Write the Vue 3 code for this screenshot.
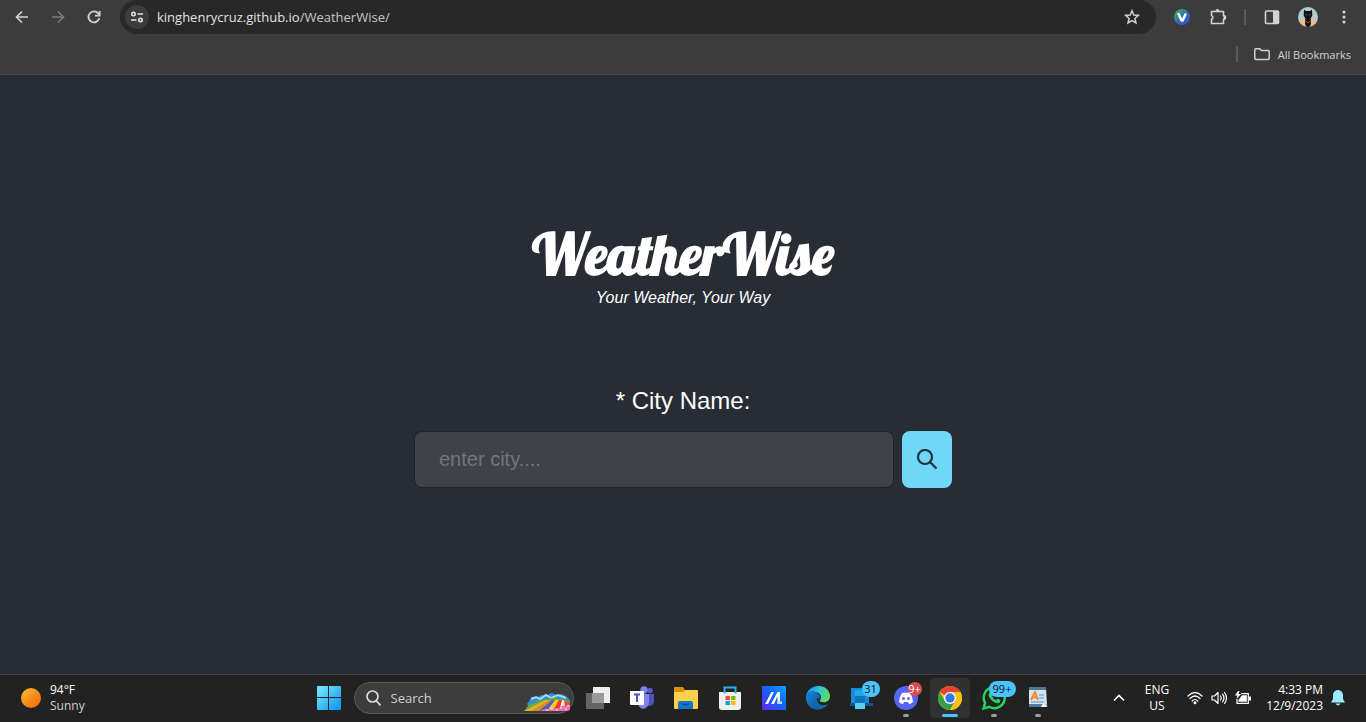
<script setup>
import { ref } from 'vue'

const city = ref('')
const query = ref('')
</script>

<template>
  <div class="screen">
    <header class="browser">
      <div class="toolbar">
        <nav class="nav">
          <button class="tool" type="button" aria-label="Back">
            <svg width="16" height="16" viewBox="0 0 16 16" fill="none" stroke="#d2d2d2" stroke-width="1.7"><path d="M14 8H3M8 2.5 2.5 8 8 13.5" /></svg>
          </button>
          <button class="tool" type="button" aria-label="Forward">
            <svg width="16" height="16" viewBox="0 0 16 16" fill="none" stroke="#7b7b7b" stroke-width="1.7"><path d="M2 8h11M8 2.5 13.5 8 8 13.5" /></svg>
          </button>
          <button class="tool" type="button" aria-label="Reload">
            <svg width="16" height="16" viewBox="0 0 16 16" fill="none" stroke="#d2d2d2" stroke-width="1.8"><path d="M13.3 9.3A5.5 5.5 0 1 1 12.2 4.3L13.5 6" /><path d="M13.6 2v4.6H9" /></svg>
          </button>
        </nav>
        <div class="omnibox">
          <button class="site" type="button" aria-label="Site information">
            <svg width="14" height="14" viewBox="0 0 14 14" fill="none" stroke="#e3e3e3" stroke-width="1.6"><circle cx="3.5" cy="4" r="1.7" /><path d="M7.5 4H13M1 10h5.5" /><circle cx="10.5" cy="10" r="1.7" /></svg>
          </button>
          <span class="url">kinghenrycruz.github.io<span class="path">/WeatherWise/</span></span>
          <button class="tool" type="button" aria-label="Bookmark this page">
            <svg width="18" height="18" viewBox="0 0 18 18" fill="none" stroke="#d2d2d2" stroke-width="1.5"><path d="m9 2.8 1.8 4.200 4.600.4-3.500 3 1.100 4.500L9 12.500l-4 2.400 1.100-4.500-3.500-3 4.600-.4z" /></svg>
          </button>
        </div>
        <div class="extensions">
          <button class="tool" type="button" aria-label="Extension">
            <svg width="16" height="16" viewBox="0 0 16 16"><defs><linearGradient id="ext" x1="0" y1="0" x2="1" y2="1"><stop offset=".15" stop-color="#3fa56d" /><stop offset=".55" stop-color="#3566b8" /><stop offset="1" stop-color="#2d4fe0" /></linearGradient></defs><circle cx="8" cy="8" r="8" fill="url(#ext)" /><path d="m4.600 5 3 6.500h1l2.800-6" fill="none" stroke="#fff" stroke-width="2.5" stroke-linecap="round" stroke-linejoin="round" /></svg>
          </button>
          <button class="tool" type="button" aria-label="Extensions">
            <svg width="18" height="18" viewBox="0 0 18 18"><path d="M2.5 3.5h12v4.1a1.8 1.8 0 0 1 0 3.6v4.3h-12v-4.2a2 2 0 0 0 0-3.8z" fill="none" stroke="#d2d2d2" stroke-width="1.6" stroke-linejoin="round" /><path d="M6.500 3a2 2 0 0 1 4 0v.6h-4zM14.5 7.500h.8a2 2 0 0 1 0 4h-.8z" fill="#d2d2d2" /></svg>
          </button>
          <span class="divider"></span>
          <button class="tool" type="button" aria-label="Side panel">
            <svg width="16" height="16" viewBox="0 0 16 16"><rect x="1.5" y="2" width="13" height="12.5" rx="1" fill="none" stroke="#d2d2d2" stroke-width="1.6" /><path d="M9 2h5.500v12.500H9z" fill="#d2d2d2" /></svg>
          </button>
          <button class="tool" type="button" aria-label="Profile">
            <svg width="20" height="20" viewBox="0 0 20 20"><defs><clipPath id="face"><circle cx="10" cy="10" r="10" /></clipPath></defs><g clip-path="url(#face)"><path d="M0 0h20v20H0z" fill="#b1cdd0" /><path d="M0 16q3-4 7-5h6q4 1 7 5v4H0z" fill="#f2bb87" /><path d="M6 2.500 7.800 4h4.400L14 2.500l.3 6-1.600 3 .2 5L12 20H8l-.9-3.500.2-5-1.600-3z" fill="#101217" /><path d="m7.500 7.500 1.800.7M12.500 7.500l-1.800.7" stroke="#69717a" stroke-width=".7" /><path d="m8 14 2 2 2-2" fill="none" stroke="#8c7445" stroke-width=".8" /></g></svg>
          </button>
          <button class="tool" type="button" aria-label="Menu">
            <svg width="16" height="16" viewBox="0 0 16 16" fill="#d2d2d2"><circle cx="8" cy="3" r="1.6" /><circle cx="8" cy="8" r="1.6" /><circle cx="8" cy="13" r="1.6" /></svg>
          </button>
        </div>
      </div>
      <div class="bookmarks">
        <span class="rule"></span>
        <button class="all" type="button">
          <svg width="16" height="16" viewBox="0 0 16 16" fill="none" stroke="#d2d2d2" stroke-width="1.5" stroke-linejoin="round"><path d="M.8 3.700q0-1 1-1h4l1.600 1.800h6.800q1 0 1 1v7q0 1-1 1H1.800q-1 0-1-1z" /></svg>
          <span>All Bookmarks</span>
        </button>
      </div>
    </header>

    <main class="page">
      <h1 class="brand">WeatherWise</h1>
      <p class="tagline">Your Weather, Your Way</p>
      <form class="form" @submit.prevent>
        <label class="label" for="city">* City Name:</label>
        <div class="row">
          <input id="city" v-model="city" class="city" type="text" placeholder="enter city...." />
          <button class="go" type="submit" aria-label="Search city">
            <svg width="22" height="22" viewBox="0 0 22 22" fill="none" stroke="#22303b" stroke-width="2.2"><circle cx="9" cy="8" r="7" /><path d="m14 13 6.500 6.500" /></svg>
          </button>
        </div>
      </form>
    </main>

    <footer class="taskbar">
      <button class="weather" type="button">
        <span class="sun"></span>
        <span class="lines"><span class="temp">94°F</span><span class="sky">Sunny</span></span>
      </button>

      <div class="apps">
        <button class="app" type="button" aria-label="Start">
          <svg width="24" height="24" viewBox="0 0 24 24"><defs><linearGradient id="win" x1="0" y1="0" x2="1" y2="1"><stop stop-color="#7cebff" /><stop offset="1" stop-color="#0a91f5" /></linearGradient></defs><path d="M0 1q0-1 1-1h10v11H0zM12 0h11q1 0 1 1v10H12zM0 12h11v12H1q-1 0-1-1zM12 12h12v11q0 1-1 1H12z" fill="url(#win)" /></svg>
        </button>
        <div class="search">
          <svg width="16" height="16" viewBox="0 0 16 16" fill="none" stroke="#dedede" stroke-width="1.7" stroke-linecap="round"><circle cx="6.500" cy="6.500" r="5.500" /><path d="m10.500 11 3.500 3.800" /></svg>
          <input v-model="query" type="text" placeholder="Search" aria-label="Search the computer" />
          <svg width="48" height="19" viewBox="0 0 48 19"><path d="M4 11 9 4l5 1 4-3 5 1 5-3 6 2 5-1 5 3 3 3v9H7z" fill="#338fd5" /><path d="m8 6 5-2 4 2 6-4 5 3 7-3 8 3" fill="none" stroke="#99ddf8" stroke-width="2" /><path d="M1 18 6 12 18 7 30 5 40 6 47 9v7l-4 2z" fill="#6aa93b" /><path d="M1 18 22 7h5L9 18z" fill="#d9b321" /><path d="M9 18 27 7h3L16 18z" fill="#e98325" /><path d="m16 18 13-11h4L24 18z" fill="#4d61c4" /><path d="m24 18 8-11h4l-5 11z" fill="#f7cc29" /><path d="m31 16 5-9h4l-3 9z" fill="#e63c27" /><path d="m37 15 2-8 4 1v7z" fill="#fff1dc" /><path d="m42 15-1-8 6 3v5z" fill="#e8502f" /><path d="m17 18 5-2 5 .5 4-2 4 1 5-3 3 1 4-2v5q-2 2-5 1.500z" fill="#ed70b7" /><g fill="#ffc5e3"><circle cx="24" cy="17" r="1" /><circle cx="29" cy="16" r="1" /><circle cx="34" cy="17" r="1" /><circle cx="38" cy="15" r="1" /><circle cx="43" cy="16" r="1" /><circle cx="45" cy="13" r="1" /></g></svg>
        </div>
        <button class="app" type="button" aria-label="Task view">
          <svg width="24" height="24" viewBox="0 0 24 24"><path d="M7 1h16q1 0 1 1v15H7z" fill="#eee" /><path d="M0 7h18v16H1q-1 0-1-1z" fill="#6e6e6e" fill-opacity=".88" /><path d="M6 7h12v10H6z" fill="#9a9a9a" /></svg>
        </button>
        <button class="app" type="button" aria-label="Teams">
          <svg width="24" height="24" viewBox="0 0 24 24"><circle cx="20" cy="4.500" r="2.800" fill="#5059c9" /><circle cx="14" cy="4" r="3.700" fill="#7b83eb" /><path d="M15 8h9v8q-1 4-5 4h-4z" fill="#4b53bc" /><path d="M8 8h11v9q-1 5-6 6-4-1-5-5z" fill="#7b83eb" /><path d="M0 5h13q1 0 1 1v13H1q-1 0-1-1z" fill="#fff" /><path d="M4 8.500h6M7 8.500V16" stroke="#4b53bc" stroke-width="2" /></svg>
        </button>
        <button class="app" type="button" aria-label="File Explorer">
          <svg width="24" height="24" viewBox="0 0 24 24"><path d="M0 2q0-1 1-1h8l2 3h12v8H0z" fill="#d9910d" /><path d="M0 6h9l3-2h11q1 0 1 1v17q0 1-1 1H1q-1 0-1-1z" fill="#ffd04c" /><path d="M4 23v-6q0-2 2-2h11q2 0 2 2v6z" fill="#0f78ca" /><path d="M8 18.500h7" stroke="#064b91" stroke-width="1.5" /></svg>
        </button>
        <button class="app" type="button" aria-label="Store">
          <svg width="24" height="24" viewBox="0 0 24 24"><path d="M6.500 7V1.500h11V7" fill="none" stroke="#29b1ea" stroke-width="2" /><path d="M1 6h22v15q0 3-3 3H4q-3 0-3-3z" fill="#f0f0f0" /><path d="M6.500 6v1.500M17.500 6v1.500" stroke="#29b1ea" stroke-width="2" /><path d="M7.500 10H12v4H7.500z" fill="#f25022" /><path d="M13 10h4.500v4H13z" fill="#7fba00" /><path d="M7.500 15H12v4H7.500z" fill="#00a4ef" /><path d="M13 15h4.500v4H13z" fill="#ffb900" /></svg>
        </button>
        <button class="app" type="button" aria-label="MyAsus">
          <svg width="24" height="24" viewBox="0 0 24 24"><defs><linearGradient id="asus" x1="0" y1="1" x2="1" y2="0"><stop stop-color="#6126ef" /><stop offset=".5" stop-color="#1760f7" /><stop offset="1" stop-color="#0aa3fc" /></linearGradient></defs><path d="M0 0h24v24H0z" fill="url(#asus)" /><path d="m3 18 6.500-12H12L6 18zM9 18l6.500-12H18v12h-2.500v-8L12 18z" fill="#fff" /><path d="M15 15.500h5V18h-5z" fill="#bdd8ff" /></svg>
        </button>
        <button class="app" type="button" aria-label="Edge">
          <svg width="24" height="24" viewBox="0 0 24 24"><defs><linearGradient id="edgeA" x1="0" y1=".2" x2="1" y2=".5"><stop stop-color="#168ee1" /><stop offset=".55" stop-color="#32c7d6" /><stop offset="1" stop-color="#63db50" /></linearGradient><linearGradient id="edgeB" x1="0" y1="0" x2="1" y2="1"><stop stop-color="#1587d8" /><stop offset="1" stop-color="#104f9b" /></linearGradient></defs><path d="M0 11C1-3 23-4 24 10c0 5-4 7-8 6-2 0-3-1-2-2 3-4-1-8-5-8-4-1-8 2-9 5z" fill="url(#edgeA)" /><path d="M0 12c0-5 5-8 9-6 4 1 6 4 5 7-3-2-7 1-6 5 1 3 4 5 7 5C7 26 0 19 0 12z" fill="url(#edgeB)" /><path d="M11 10c-7 4-4 14 4 13 3-1 6-3 7-5-5 3-12 1-11-8z" fill="#126aae" /></svg>
        </button>
        <button class="app" type="button" aria-label="Phone Link, 31 notifications">
          <svg width="24" height="24" viewBox="0 0 24 24"><path d="M1 2h18v15H1z" fill="#168bd8" /><path d="M0 17h23v3H0z" fill="#0b5698" /><path d="M5 4h10v19H5z" fill="#1caae9" /><path d="M5 10h10v7H5z" fill="#0c75bf" /><path d="M5 17h10v6H5z" fill="#55ceef" /></svg>
          <span class="badge">31</span>
        </button>
        <button class="app" type="button" aria-label="Discord, more than 9 notifications">
          <svg width="24" height="24" viewBox="0 0 24 24"><circle cx="12" cy="12" r="12" fill="#5865f2" /><path d="M8 7q4-1 8 0 3 4 3 9-2 2-4 2l-1-2h-4l-1 2q-2 0-4-2 0-5 3-9z" fill="#fff" /><circle cx="9.500" cy="12.500" r="1.500" fill="#5865f2" /><circle cx="14.500" cy="12.500" r="1.500" fill="#5865f2" /></svg>
          <span class="badge red">9+</span><span class="dot"></span>
        </button>
        <button class="app active" type="button" aria-label="Chrome">
          <svg width="24" height="24" viewBox="0 0 24 24"><circle cx="12" cy="12" r="12" fill="#fbc116" /><path d="M12 12 1.600 6A12 12 0 0 1 22.400 6H12z" fill="#ea4335" /><path d="M1.600 6A12 12 0 0 0 12 24l5.200-9L12 12 6.800 15z" fill="#34a04b" /><path d="M22.400 6H12l5.200 9L12 24A12 12 0 0 0 22.400 6z" fill="#fbc116" /><circle cx="12" cy="12" r="6" fill="#fff" /><circle cx="12" cy="12" r="4.700" fill="#3478e8" /></svg>
          <span class="dot"></span>
        </button>
        <button class="app" type="button" aria-label="WhatsApp, more than 99 notifications">
          <svg width="24" height="24" viewBox="0 0 24 24"><path d="m1.500 22.500 1.600-5.700a10.500 10.500 0 1 1 4 4z" fill="none" stroke="#25d366" stroke-width="2.4" /><path d="M8 6 6.500 8q0 4 4 7t7 2l1-3-3-1.500-1.500 1.500q-3-1-4-4l1-1.500L9.500 6z" fill="#25d366" /></svg>
          <span class="badge wide">99+</span><span class="dot"></span>
        </button>
        <button class="app" type="button" aria-label="WordPad">
          <svg width="24" height="24" viewBox="0 0 24 24"><path d="M3 2h17l1 17H3z" fill="#d5e5f0" /><path d="M3 1h17v3H3z" fill="#4f7494" /><path d="M3 18h18l1 3H3z" fill="#537b9f" /><path d="M13 9h5M13 12h5M5 16h13" stroke="#81afd2" stroke-width="1.3" /><path d="m5 14 4-8 3 8M6.500 11.500h4" fill="none" stroke="#ee8a36" stroke-width="2" /><path d="m17 17 4 2-1 2h-5z" fill="#eff5f8" /></svg>
          <span class="dot"></span>
        </button>
      </div>

      <div class="tray">
        <button class="caret" type="button" aria-label="Show hidden icons">
          <svg width="12" height="8" viewBox="0 0 12 8" fill="none" stroke="#fff" stroke-width="1.6"><path d="m1 6.500 5-5 5 5" /></svg>
        </button>
        <button class="lang" type="button"><span>ENG</span><span>US</span></button>
        <button class="status" type="button" aria-label="Network, volume and battery">
          <svg width="16" height="14" viewBox="0 0 16 14" fill="none" stroke="#fff" stroke-width="1.2" stroke-linecap="round"><path d="M1 5q7-7 14 0M3 7.500q5-5 10 0M5.200 10q2.800-3 5.600 0" /><circle cx="8" cy="11.800" r=".9" fill="#fff" /></svg>
          <svg width="16" height="14" viewBox="0 0 16 14" fill="none" stroke="#fff" stroke-width="1.2" stroke-linejoin="round" stroke-linecap="round"><path d="M1 5h2.500L7 1.500v11L3.500 9H1zM9.500 5q1.500 2 0 4M11.500 3.200q3 3.800 0 7.600M13.500 1.500q4 5.500 0 11" /></svg>
          <svg width="16" height="14" viewBox="0 0 16 14"><path d="M6 2.700h7.300v9.600H2V8" fill="none" stroke="#fff" stroke-width="1.2" /><path d="M7 4.300h4.800v6.500H3.500V9z" fill="#fff" /><path d="M14 5.500h2v4h-2z" fill="#fff" /><path d="M3 0 0 4.500h2.500L1.500 8 6 3H3.500L4.500 0z" fill="#fff" /></svg>
        </button>
        <button class="clock" type="button"><span>4:33 PM</span><span>12/9/2023</span></button>
        <button class="bell" type="button" aria-label="Notifications">
          <svg width="14" height="16" viewBox="0 0 14 16" fill="#99ebff"><path d="M7 0a5 5 0 0 1 5 5v4l2 3.500H0L2 9V5a5 5 0 0 1 5-5zM4.500 13.500h5q-2.500 4-5 0z" /></svg>
        </button>
      </div>
    </footer>
  </div>
</template>

<style>
body {
  margin: 0;
  background: #282c34;
}
</style>

<style scoped>
.screen {
  display: flex;
  flex-direction: column;
  min-height: 100vh;
  font-family: "Segoe UI", "Open Sans", sans-serif;
  color: #e3e3e3;
}
button {
  display: flex;
  align-items: center;
  justify-content: center;
  padding: 0;
  border: 0;
  background: none;
  color: inherit;
  font: inherit;
}
svg {
  display: block;
  flex: none;
}
.browser {
  background: #3c3c3c;
  border-bottom: 1px solid #4a4a4a;
}
.toolbar {
  display: flex;
  gap: 8px;
  height: 34px;
  padding: 0 4px;
}
.nav,
.extensions {
  display: flex;
  align-items: center;
}
.tool {
  width: 36px;
  height: 34px;
}
.omnibox {
  display: flex;
  flex: 1;
  align-items: center;
  padding: 0 6px 0 5px;
  border-radius: 17px;
  background: #282828;
}
.site {
  width: 24px;
  height: 24px;
  border-radius: 50%;
  background: #3c3c3c;
}
.url {
  flex: 1;
  margin-left: 8px;
  font-size: 13px;
}
.path {
  color: #c7c7c7;
}
.divider {
  width: 2px;
  height: 16px;
  margin: 0 8px;
  background: #5c5c5c;
}
.bookmarks {
  display: flex;
  align-items: center;
  justify-content: flex-end;
  gap: 16px;
  height: 40px;
  padding-right: 15px;
}
.rule {
  width: 2px;
  height: 16px;
  background: #5c5c5c;
}
.all {
  gap: 8px;
  font-size: 11px;
  color: #d2d2d2;
}
.page {
  display: flex;
  flex: 1;
  flex-direction: column;
  align-items: center;
  justify-content: center;
  padding: 0 16px 39px;
  background: #282c34;
  color: #fff;
  font-family: "Liberation Sans", Arial, sans-serif;
}
.brand {
  margin: 0;
  font-family: Lobster, "Liberation Serif", serif;
  font-size: 56px;
  font-weight: 700;
  line-height: 64px;
}
.tagline {
  margin: 0;
  font-size: 16px;
  font-style: italic;
  line-height: 24px;
}
.form {
  display: flex;
  flex-direction: column;
  align-items: center;
  width: 100%;
  max-width: 538px;
  margin-top: 75px;
}
.label {
  font-size: 24px;
  line-height: 32px;
}
.row {
  display: flex;
  gap: 8px;
  width: 100%;
  margin-top: 14px;
}
.city {
  flex: 1;
  min-width: 0;
  padding: 16px 24px;
  border: 1px solid #1f2227;
  border-radius: 8px;
  outline: 0;
  background: #3f4248;
  color: #fff;
  font-family: inherit;
  font-size: 20px;
}
.city::placeholder {
  color: #757575;
}
.go {
  width: 50px;
  height: 57px;
  border-radius: 8px;
  background: #6fd7f7;
}
.taskbar {
  display: grid;
  grid-template-columns: 1fr auto 1fr;
  align-items: center;
  height: 46px;
  padding-bottom: 1px;
  border-top: 1px solid #414141;
  background: #222;
  color: #fff;
  font-size: 12px;
  line-height: 16px;
}
.weather {
  justify-content: flex-start;
  gap: 9px;
  padding-left: 21px;
}
.sun {
  width: 20px;
  height: 20px;
  border-radius: 50%;
  background: linear-gradient(135deg, #f8bd32, #f36306);
}
.lines {
  display: flex;
  flex-direction: column;
  text-align: left;
}
.temp {
  font-weight: 500;
}
.sky {
  color: #cfcfcf;
}
.apps {
  display: flex;
  align-items: center;
}
.app {
  position: relative;
  width: 44px;
  height: 40px;
}
.search {
  display: flex;
  align-items: center;
  width: 220px;
  height: 32px;
  margin: 0 2px 0 3px;
  padding: 0 2px 0 11px;
  box-sizing: border-box;
  border: 1px solid #595959;
  border-radius: 16px;
  background: #3d3d3d;
}
.search input {
  flex: 1;
  min-width: 0;
  margin-left: 9px;
  padding: 0;
  border: 0;
  outline: 0;
  background: none;
  color: #fff;
  font-family: inherit;
  font-size: 13px;
}
.search input::placeholder {
  color: #cfcfcf;
}
.search svg:last-child {
  align-self: flex-end;
  margin-bottom: 1px;
}
.active {
  width: 40px;
  margin: 0 2px;
  border-radius: 4px;
  background: #313131;
}
.badge {
  position: absolute;
  top: 3px;
  left: 22px;
  min-width: 18px;
  border-radius: 8px;
  background: #4cc2ff;
  color: #111;
  font-size: 11px;
  text-align: center;
}
.badge.red {
  top: 4px;
  left: 24px;
  min-width: 14px;
  background: #da4b4e;
  color: #fff;
  line-height: 14px;
}
.badge.wide {
  left: 17px;
  min-width: 27px;
}
.dot {
  position: absolute;
  bottom: 1px;
  left: 50%;
  width: 6px;
  height: 3px;
  border-radius: 2px;
  background: #9a9a9a;
  transform: translateX(-50%);
}
.active .dot {
  width: 16px;
  background: #4cc2ff;
}
.tray {
  display: flex;
  align-items: center;
  justify-content: flex-end;
  padding-right: 21px;
}
.caret {
  margin-right: 20px;
}
.lang {
  flex-direction: column;
  margin-right: 18px;
}
.status {
  gap: 8px;
  margin-right: 15px;
}
.clock {
  flex-direction: column;
  align-items: flex-end;
  margin-right: 8px;
}
</style>
